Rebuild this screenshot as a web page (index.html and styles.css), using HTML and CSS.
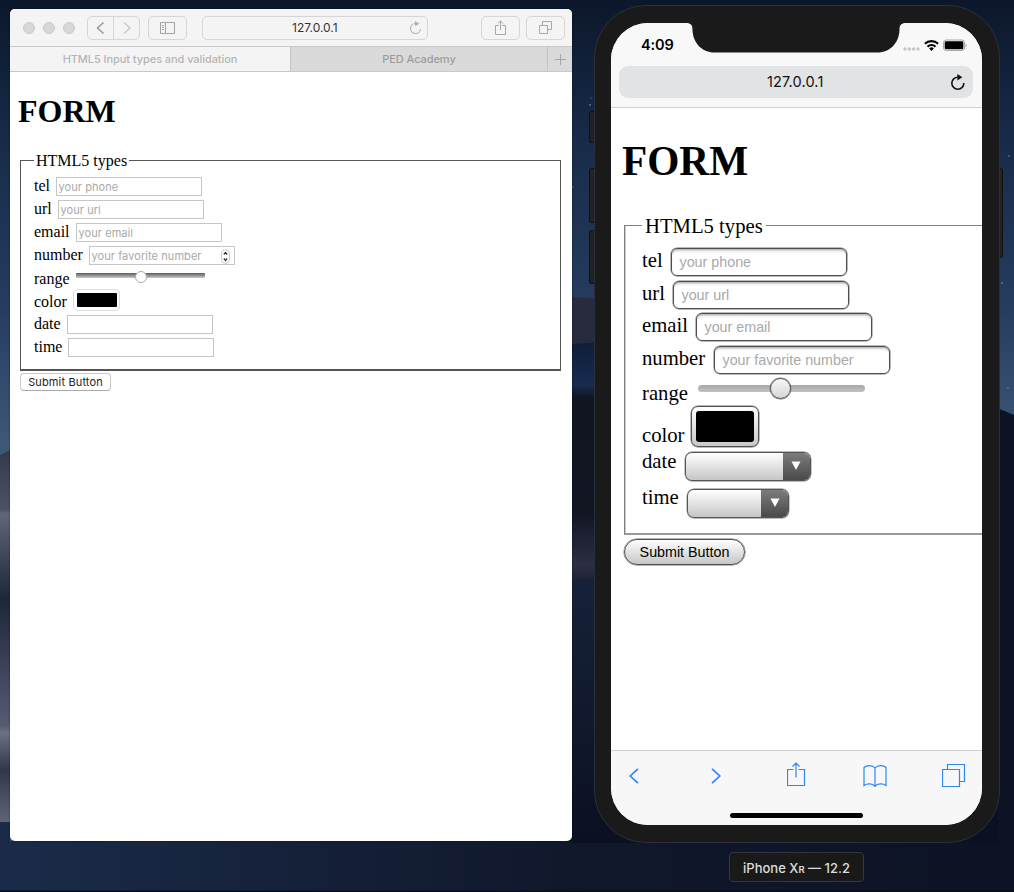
FILE: index.html
```html
<!DOCTYPE html>
<html lang="en">
<head>
<meta charset="utf-8">
<title>HTML5 Input types and validation</title>
<link rel="stylesheet" href="styles.css">
</head>
<body>
<main class="desktop">
  <svg class="wallpaper" viewBox="0 0 1014 892" preserveAspectRatio="none" aria-hidden="true">
    <defs>
      <linearGradient id="sky" x2="0" y2="1"><stop offset="0" stop-color="#0c172b"/><stop offset=".15" stop-color="#172a48"/><stop offset=".35" stop-color="#263d60"/><stop offset=".5" stop-color="#3e5878"/></linearGradient>
      <linearGradient id="duneA" x2="0" y2="1"><stop offset="0" stop-color="#34394e"/><stop offset=".16" stop-color="#4b5166"/><stop offset=".17" stop-color="#60677c"/><stop offset=".4" stop-color="#1e263c"/><stop offset=".74" stop-color="#555b72"/><stop offset=".76" stop-color="#6b7085"/><stop offset=".86" stop-color="#30364c"/><stop offset="1" stop-color="#5f647b"/></linearGradient>
      <linearGradient id="duneB" x2="0" y2="1"><stop offset="0" stop-color="#0e1d39"/><stop offset=".18" stop-color="#182c50"/><stop offset=".23" stop-color="#111521"/><stop offset=".72" stop-color="#121624"/><stop offset=".93" stop-color="#2c2e42"/><stop offset="1" stop-color="#1c2236"/></linearGradient>
      <linearGradient id="duneC" x2="0" y2="1"><stop offset="0" stop-color="#16223a"/><stop offset="1" stop-color="#0b1021"/></linearGradient>
      <linearGradient id="ground"><stop offset="0" stop-color="#1b2b49"/><stop offset=".55" stop-color="#10182c"/><stop offset="1" stop-color="#0d1324"/></linearGradient>
    </defs>
    <rect width="1014" height="892" fill="url(#sky)"/>
    <path d="M0 455L10 450V822H0z" fill="url(#duneA)"/>
    <path d="M560 297l36 1v50h-36z" fill="#282b3d"/>
    <path d="M560 345l40-3v240h-40z" fill="url(#duneB)"/>
    <path d="M560 581l40-4v270h-40z" fill="url(#duneC)"/>
    <path d="M995 407l19 8v440h-19z" fill="#0d1324"/>
    <path d="M598 760h400v90H598z" fill="#0c1122"/>
    <path d="M0 822h10v19h562v2h442v49H0z" fill="url(#ground)"/>
    <path d="M0 890.5h1014v1.500H0z" fill="#080c18"/>
    <g fill="#8da0b8"><circle cx="590" cy="105" r=".8"/><circle cx="591" cy="98" r=".5"/><circle cx="573" cy="187" r=".6"/><circle cx="1009" cy="156" r=".7"/><circle cx="1002" cy="283" r=".7"/><circle cx="1008" cy="388" r=".7"/></g>
  </svg>

  <section class="browser">
    <header class="bar">
      <div class="lights"><i></i><i></i><i></i></div>
      <div class="btn pair">
        <svg width="52" height="22" viewBox="0 0 52 22" fill="none"><path d="M15.500 5.500L9.500 11l6 5.500" stroke="#999" stroke-width="1.500"/><path d="M36 5.500l6 5.500-6 5.500" stroke="#c9c9c9" stroke-width="1.500"/><path d="M25.500 0v22" stroke="#d6d6d6"/></svg>
      </div>
      <div class="btn side">
        <svg width="15" height="12" viewBox="0 0 15 12" fill="none" stroke="#a3a3a3"><path d="M.5.500h14v11H.5zM5.500.500v11M2 3.500h2M2 5.500h2M2 7.500h2"/></svg>
      </div>
      <div class="btn address"><span>127.0.0.1</span>
        <svg width="13" height="14" viewBox="0 0 13 14"><path d="M6.500 2.500A5 5 0 1 0 11.500 8" fill="none" stroke="#b0b0b0" stroke-width="1.100"/><path d="M6 0l4.500 2.700L6 5.200z" fill="#b0b0b0"/></svg>
      </div>
      <div class="btn tool first">
        <svg width="12" height="16" viewBox="0 0 12 16" fill="none" stroke="#a7a7a7"><path d="M4 5.500H.5v9h10v-9H7M5.500 10V1M2.800 3.600L5.500 1l2.700 2.600"/></svg>
      </div>
      <div class="btn tool">
        <svg width="13" height="13" viewBox="0 0 13 13" fill="none" stroke="#a7a7a7"><path d="M.5 4.500h8v8h-8zM3.500 4.500v-4h9v8h-4"/></svg>
      </div>
    </header>
    <nav class="tabs">
      <div class="tab current"><span>HTML5 Input types and validation</span></div>
      <div class="tab other"><span>PED Academy</span></div>
      <div class="add"><svg width="11" height="11" viewBox="0 0 11 11"><path d="M5.500 0v11M0 5.500h11" stroke="#a5a5a5"/></svg></div>
    </nav>
    <div class="page">
      <h1>FORM</h1>
      <div class="fields">
        <div class="caption"><span>HTML5 types</span></div>
        <div class="row"><label class="l-tel">tel</label><div class="input">your phone</div></div>
        <div class="row"><label class="l-url">url</label><div class="input">your url</div></div>
        <div class="row"><label class="l-email">email</label><div class="input">your email</div></div>
        <div class="row number"><label class="l-number">number</label><div class="input"><span>your favorite number</span>
          <svg width="9" height="15" viewBox="0 0 9 15" fill="none"><rect x=".5" y=".5" width="8" height="14" rx="4" fill="#fff" stroke="#c8c8c8"/><path d="M2.800 5.500l1.700-2 1.700 2M2.800 9.500l1.700 2 1.700-2" stroke="#333" stroke-width="1.200"/></svg></div></div>
        <div class="row low"><label class="l-email">range</label><div class="slider"><i></i></div></div>
        <div class="row low"><label class="l-color">color</label><div class="swatch"><i></i></div></div>
        <div class="row"><label class="l-date">date</label><div class="input"></div></div>
        <div class="row"><label class="l-time">time</label><div class="input"></div></div>
      </div>
      <div class="submit">Submit Button</div>
    </div>
  </section>

  <section class="phone">
    <i class="key k1"></i><i class="key k2"></i><i class="key k3"></i><i class="key k4"></i>
    <div class="body">
      <div class="screen">
        <svg class="notch" width="220" height="30" viewBox="0 0 220 30"><path d="M0 0h220c-5 0-6.500 2-6.500 7-.5 13-9.500 22.500-22 22.500h-163C16 29.500 7 20 6.500 7 6.500 2 5 0 0 0z" fill="#1a1a1a"/></svg>
        <header class="mobile-top">
          <div class="status"><b>4:09</b>
            <svg width="64" height="13" viewBox="0 0 64 13"><g fill="#c6c6c7"><circle cx="2" cy="10" r="1.700"/><circle cx="6.300" cy="10" r="1.700"/><circle cx="10.600" cy="10" r="1.700"/><circle cx="14.900" cy="10" r="1.700"/></g><g fill="none" stroke="#000" stroke-width="2.200"><path d="M21.900 4.800a9.400 9.400 0 0 1 13.200 0M24.500 7.700a5.600 5.600 0 0 1 8 0"/></g><path d="M26.200 9.400a3.400 3.400 0 0 1 4.600 0l-2.300 2.500z"/><rect x="40.500" y="1" width="21" height="10.500" rx="2.500" fill="none" stroke="#a8a8a8"/><rect x="41.700" y="2.200" width="18.600" height="8.100" rx="1.300"/><path d="M62.500 4.800c1.400.3 1.400 3.200 0 3.500z" fill="#a0a0a0"/></svg>
          </div>
          <div class="mobile-address"><span>127.0.0.1</span>
            <svg width="16" height="17" viewBox="0 0 16 17"><path d="M8 3.200A6 6 0 1 0 13.800 9" fill="none" stroke="#111" stroke-width="1.600"/><path d="M7.400 0l5 3.300-5 3.200z" fill="#111"/></svg>
          </div>
        </header>
        <div class="mobile-page">
          <h1>FORM</h1>
          <div class="m-fields">
            <div class="m-caption"><span>HTML5 types</span></div>
            <div class="m-row"><label class="m-tel">tel</label><div class="m-input">your phone</div></div>
            <div class="m-row"><label class="m-url">url</label><div class="m-input">your url</div></div>
            <div class="m-row"><label class="m-email">email</label><div class="m-input">your email</div></div>
            <div class="m-row"><label class="m-number">number</label><div class="m-input">your favorite number</div></div>
            <div class="m-row m-range"><label class="m-range-label">range</label><div class="m-slider"><i></i></div></div>
            <div class="m-row m-color"><label class="m-color-label">color</label><div class="m-swatch"><i></i></div></div>
            <div class="m-row m-pick"><label class="m-date">date</label><div class="select wide"><i><svg width="12" height="10" viewBox="0 0 12 10"><path d="M1.500 .5h9L6 9z" fill="#fff"/></svg></i></div></div>
            <div class="m-row m-pick"><label class="m-time">time</label><div class="select"><i><svg width="12" height="10" viewBox="0 0 12 10"><path d="M1.500 .5h9L6 9z" fill="#fff"/></svg></i></div></div>
          </div>
          <div class="m-submit">Submit Button</div>
        </div>
        <footer class="mobile-bottom">
          <div class="icons">
            <svg class="back" width="10" height="16" viewBox="0 0 10 16"><path d="M9 .8L1.200 8 9 15.200"/></svg>
            <svg class="forward" width="10" height="16" viewBox="0 0 10 16"><path d="M1 .8L8.800 8 1 15.200"/></svg>
            <svg class="share" width="19" height="25" viewBox="0 0 19 25"><path d="M6.500 7.500h-6v16h17v-16h-6M9 15.500V1M5.500 4.500L9 1l3.500 3.500"/></svg>
            <svg class="book" width="24" height="24" viewBox="0 0 24 24"><path d="M12 4C9.500.8 3.500.8 1 3.500v18c3-2.200 8.500-2.200 11 .8 2.500-3 8-3 11-.8v-18C20.500.8 14.500.8 12 4zM12 4v19"/></svg>
            <svg class="pages" width="24" height="24" viewBox="0 0 24 24"><path d="M.5 6.500h17v17H.5zM5.500 4V1.500h17v17H20M5.500 4v2.500M17.500 18.500H20"/></svg>
          </div>
          <div class="home"></div>
        </footer>
      </div>
    </div>
  </section>
  <div class="device-name"><span>iPhone X<small>R</small> — 12.2</span></div>
</main>
</body>
</html>
```

FILE: styles.css
```css
* { box-sizing: border-box; }
html, body { margin: 0; }
body { font-family: "Liberation Serif", serif; color: #000; }
svg { display: block; flex: none; }
i { display: block; font-style: normal; }
.desktop { position: relative; width: 1014px; height: 892px; overflow: hidden; }
.wallpaper { position: absolute; inset: 0; width: 1014px; height: 892px; }

/* Desktop browser window */
.browser { position: absolute; left: 10px; top: 9px; width: 562px; height: 832px; background: #fff; border-radius: 5px; overflow: hidden; box-shadow: 0 0 2px #0008; }
.bar { display: flex; align-items: center; height: 38px; padding: 0 7px 0 13px; background: #f4f4f4; border-bottom: 1px solid #cacaca; }
.lights { display: flex; gap: 8px; margin-right: 12px; }
.lights i { width: 12px; height: 12px; border-radius: 50%; background: #d7d7d7; border: 1px solid #c9c9c9; }
.btn { display: flex; align-items: center; justify-content: center; height: 24px; border: 1px solid #d6d6d6; border-radius: 5px; flex: none; }
.pair { width: 53px; }
.side { width: 39px; margin-left: 8px; }
.address { width: 226px; margin-left: 15px; padding: 1px 5px 0 89px; justify-content: space-between; font: 12px/22px Inter, sans-serif; letter-spacing: 0; color: #333; }
.tool { width: 39px; margin-left: 6px; }
.tool.first { margin-left: 53px; }
.tabs { display: flex; height: 25px; border-bottom: 1px solid #c9c9c9; font: 500 11px/24px Inter, sans-serif; text-align: center; }
.current { width: 280px; background: #f4f4f4; color: #b5b5b5; letter-spacing: -.07px; }
.other { width: 258px; background: #dadada; border-left: 1px solid #c5c5c5; border-right: 1px solid #c5c5c5; color: #9c9c9c; letter-spacing: -.08px; }
.add { flex: 1; display: flex; align-items: center; justify-content: center; background: #dadada; }
.page { padding: 21px 11px 0 8px; }
.page h1 { margin: 0; font-size: 32px; line-height: 37px; }
.fields { height: 211px; margin: 30px 0 0 2px; border: 1px solid #555; border-bottom-width: 2px; padding-left: 13px; }
.caption { height: 14px; display: flex; align-items: flex-start; }
.caption span { margin-top: -10px; padding: 0 2px; background: #fff; font-size: 16px; line-height: 20px; white-space: nowrap; }
.row { display: flex; height: 23px; align-items: flex-start; padding-top: 2px; font-size: 16px; line-height: 18px; }
.row.low label { margin-top: 1px; }
.l-tel { width: 22px; } .l-url { width: 24px; } .l-email { width: 42px; } .l-number { width: 55px; } .l-color { width: 39px; } .l-date { width: 33px; } .l-time { width: 34px; }
.input { display: flex; align-items: center; justify-content: space-between; width: 146px; height: 19px; border: 1px solid #c6c6c6; padding: 1px 4px 0 1.500px; font: 11px/15px Inter, sans-serif; letter-spacing: .07px; color: #a9a9a9; white-space: nowrap; }
.slider { width: 129px; height: 5px; margin-top: 4px; background: linear-gradient(#5b5b5b, #c8c8c8); border-radius: 1px; }
.slider i { width: 12px; height: 12px; margin: -2.500px 0 0 58.500px; border-radius: 50%; background: #fff; border: 1px solid #aaa; }
.swatch { width: 47px; height: 22px; margin-top: -3px; padding: 3px 2.500px; border: 1px solid #ddd; border-radius: 4px; }
.swatch i { width: 40px; height: 14px; border-radius: 1px; background: #000; }
.submit { width: 91px; height: 18px; margin: 2px 0 0 2px; border: 1px solid #c8c8c8; border-bottom-color: #aaa; border-radius: 4px; text-align: center; font: 11px/17px Inter, sans-serif; letter-spacing: .14px; color: #222; white-space: nowrap; }

/* Simulated phone */
.phone { position: absolute; left: 594px; top: 5px; width: 406px; height: 838px; }
.key { position: absolute; left: -5px; width: 8px; background: #222; border: 1px solid #111; border-radius: 2px; }
.k1 { top: 106px; height: 32px; } .k2 { top: 163px; height: 55px; } .k3 { top: 225px; height: 54px; } .k4 { left: 401px; top: 163px; height: 90px; }
.body { position: relative; height: 838px; padding: 17px 16px 16px; border: 1px solid #2c303a; border-radius: 52px; background: #1a1a1a; }
.screen { position: relative; display: flex; flex-direction: column; width: 371px; height: 802px; background: #fff; border-radius: 37px; overflow: hidden; }
.notch { position: absolute; left: 75px; top: 0; }
.mobile-top { height: 85px; padding: 0 8px; background: #f8f8f8; border-bottom: 1px solid #d0d0d0; flex: none; }
.status { display: flex; justify-content: space-between; align-items: center; height: 43px; padding: 1px 7px 0 22px; font: 14.500px/20px Inter, sans-serif; }
.status b { font-weight: 600; letter-spacing: -.15px; }
.mobile-address { display: flex; align-items: center; justify-content: space-between; height: 32px; width: 354px; padding: 0 7px 0 148px; border-radius: 9px; background: #e2e3e5; font: 14.500px/32px Inter, sans-serif; letter-spacing: .15px; color: #111; }
.mobile-page { flex: 1; min-height: 0; padding: 29px 0 0 11px; }
.mobile-page h1 { margin: 0; font-size: 41.300px; line-height: 48px; }
.m-fields { height: 310px; margin: 40px 0 0 2px; border: solid #808080; border-width: 1px 0 2px 1px; border-bottom-color: #999; box-shadow: inset 1px 0 #ccc; padding: 1px 0 0 17px; }
.m-caption { height: 21px; }
.m-caption span { display: block; width: 124px; padding: 0 3px; background: #fff; font-size: 20.700px; line-height: 24px; transform: translateY(-13px); white-space: nowrap; }
.m-row { display: flex; height: 32.600px; align-items: flex-start; font-size: 20.700px; line-height: 24px; }
.m-tel { width: 29px; } .m-url { width: 31px; } .m-email { width: 54px; } .m-number { width: 72px; } .m-range-label { width: 56px; } .m-color-label { width: 48.500px; } .m-date { width: 42.500px; } .m-time { width: 45px; }
.m-row label { flex: none; }
.m-input { width: 176px; height: 28px; padding: 0 7.500px; border: 1px solid #4f4f4f; border-radius: 6px; box-shadow: 0 0 0 .5px #777, inset 0 3px 3px -2px #999; font: 14.300px/27px "Liberation Sans", sans-serif; color: #a9a9a9; white-space: nowrap; }
.m-range { height: 28px; }
.m-range label { margin-top: 3px; }
.m-slider { width: 167px; height: 7px; margin-top: 7px; border-radius: 4px; background: linear-gradient(#a8a8a8, #c2c2c2); }
.m-slider i { width: 21px; height: 21px; margin: -7px 0 0 72px; border-radius: 50%; border: 1px solid #505050; box-shadow: 0 0 0 .4px #777; background: linear-gradient(#f7f7f7, #d6d6d6); }
.m-color { height: 45px; }
.m-color label { margin-top: 16.500px; }
.m-swatch { width: 68px; height: 41px; padding: 4px; border: 1px solid #505050; box-shadow: 0 0 0 .5px #777; border-radius: 7px; background: linear-gradient(#fff, #c8c8c8); }
.m-swatch i { width: 58px; height: 31px; border-radius: 3px; background: #000; }
.m-pick { height: 36.500px; }
.m-pick label { margin-top: -2.500px; }
.select { display: flex; justify-content: flex-end; width: 102px; height: 29px; margin-top: 1px; border: 1px solid #555; box-shadow: 0 0 0 .4px #777; border-radius: 7px; overflow: hidden; background: linear-gradient(#fff, #c6c6c6); }
.select.wide { width: 126px; }
.select i { width: 27px; height: 100%; padding: 8px 0 0 7.500px; background: linear-gradient(#7c7c7c, #494949); }
.m-submit { width: 121px; height: 26px; margin: 4px 0 0 2px; border: 1px solid #505050; box-shadow: 0 0 0 .5px #777; border-radius: 14px; text-align: center; background: linear-gradient(#fff, #c6c6c6); font: 14.300px/24px "Liberation Sans", sans-serif; white-space: nowrap; }
.mobile-bottom { height: 75px; flex: none; border-top: 1px solid #cfcfcf; background: #f7f7f7; }
.icons { display: flex; align-items: center; height: 49px; padding-left: 18px; }
.icons svg { fill: none; stroke: #2d87f5; stroke-width: 1.200; }
.icons .back, .icons .forward { stroke-width: 1.700; }
.forward { margin-left: 72px; }
.share { margin: -3px 0 0 66px; }
.book { margin-left: 57px; }
.pages { margin: -2px 0 0 55px; }
.home { width: 133px; height: 5px; margin: 13px auto 0; border-radius: 3px; background: #000; }
.device-name { position: absolute; left: 729px; top: 852px; width: 135px; height: 30px; border: 1px solid #343741; border-radius: 4px; background: #191919; color: #ddd; text-align: center; font: 500 13px/30px Inter, sans-serif; white-space: nowrap; }
.device-name small { font-size: 9.500px; font-weight: 600; }
```
